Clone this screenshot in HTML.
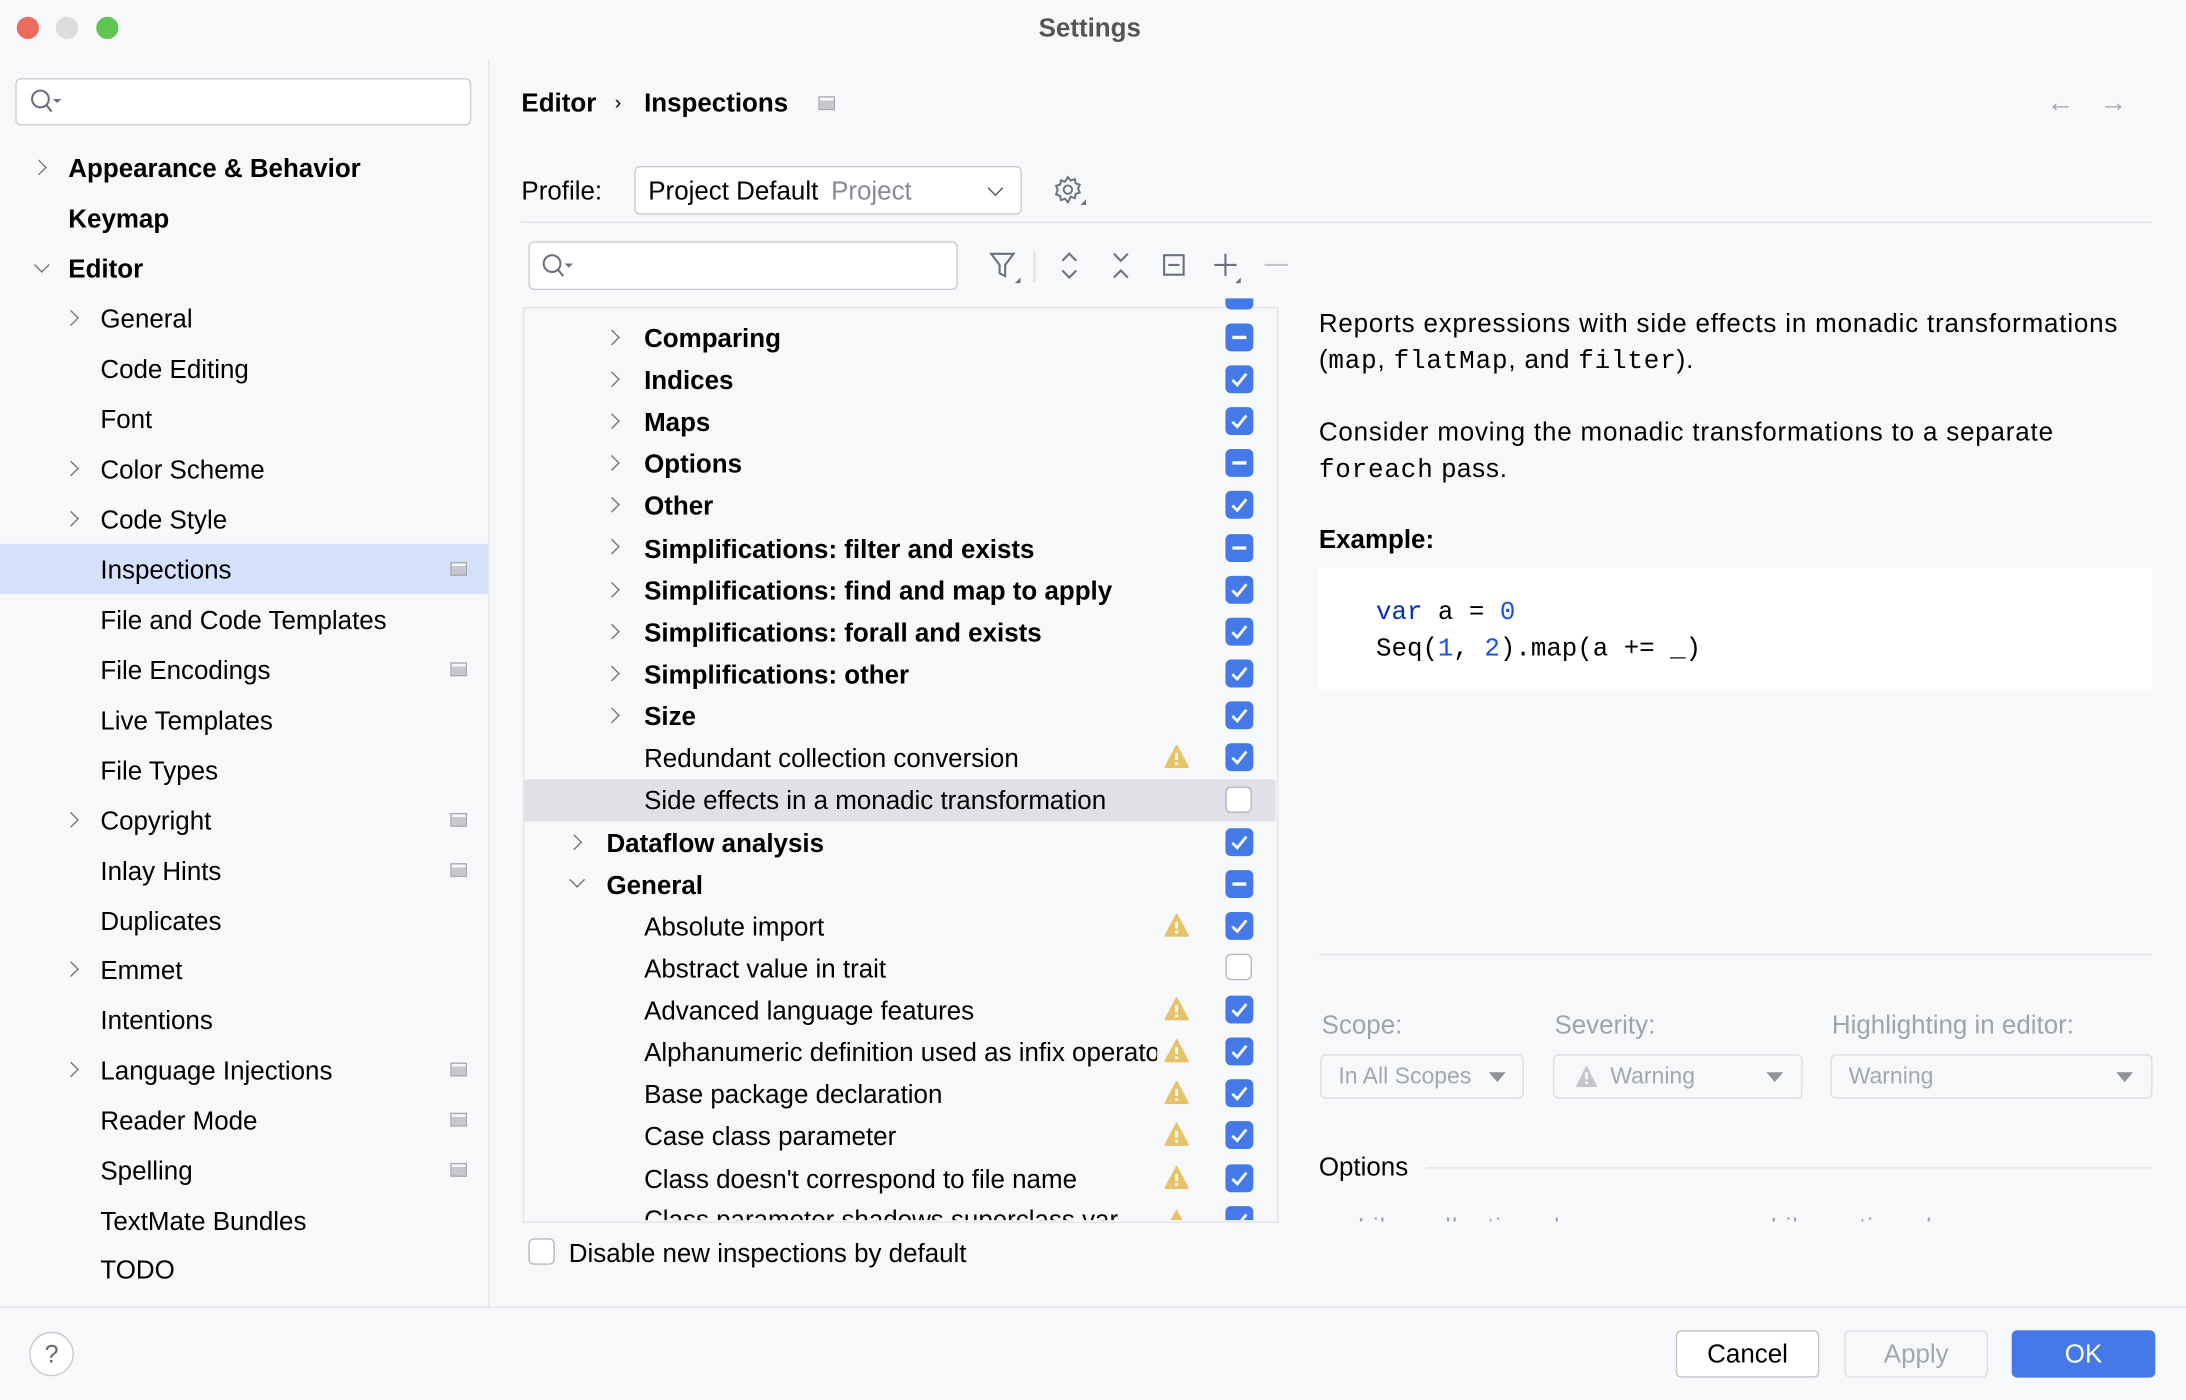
<!DOCTYPE html>
<html><head><meta charset="utf-8"><style>
html,body{margin:0;padding:0;width:2186px;height:1400px;overflow:hidden;background:#f7f8fa}
#w{position:absolute;left:0;top:0;width:1568px;height:1004px;transform:scale(1.39413,1.39442);transform-origin:0 0;font-family:"Liberation Sans",sans-serif;color:#000;font-size:18.6px}
.a{position:absolute;white-space:nowrap;line-height:24px;height:24px}
.b{font-weight:bold}
.chev{position:absolute;width:7px;height:7px;border-right:1.5px solid #777;border-bottom:1.5px solid #777}
.r{transform:rotate(-45deg)}.d{transform:rotate(45deg)}
.cb{position:absolute;left:879px;width:20px;height:20px;border-radius:4px;background:#4479e7}
.cb.e{background:#fff;border:1.5px solid #b5b8c0;width:17px;height:17px}
.cb svg{position:absolute;left:0;top:0}
.warn{position:absolute;left:835px}
.mono{font-family:"Liberation Mono",monospace}
.pin{position:absolute;left:323px;width:10px;height:8px;border:1px solid #a8abb3;background:linear-gradient(#f7f8fa 0 2px,#c6c8ce 2px)}
.gr{color:#9fa3ab}
.ds{letter-spacing:.6px}
.dd{position:absolute;top:756px;height:30px;border:1px solid #dcdee3;border-radius:4px;background:#f7f8fa;color:#a3a7ae;font-size:16.5px;line-height:30px}
.tri{position:absolute;top:12px;width:0;height:0;border-left:6px solid transparent;border-right:6px solid transparent;border-top:7px solid #8e9299}
</style></head><body><div id="w">
<div style="position:absolute;left:12px;top:12px;width:16px;height:16px;border-radius:50%;background:#ed6a5e"></div>
<div style="position:absolute;left:40px;top:12px;width:16px;height:16px;border-radius:50%;background:#dcdcdc"></div>
<div style="position:absolute;left:69px;top:12px;width:16px;height:16px;border-radius:50%;background:#61c554"></div>
<div class="a b" style="left:745px;top:8px;color:#555;font-size:18.6px">Settings</div>
<div style="position:absolute;left:350px;top:42px;width:1px;height:895px;background:#e6e7ea"></div>
<div style="position:absolute;left:11px;top:56px;width:325px;height:32px;border:1px solid #c9ccd2;border-radius:4px;background:#fff"></div>
<svg style="position:absolute;left:21px;top:63px" width="26" height="20"><circle cx="8" cy="8" r="6" fill="none" stroke="#6c707e" stroke-width="1.5"/><path d="M12 12l4 5" stroke="#6c707e" stroke-width="1.5"/><path d="M17 8h6l-3 3z" fill="#6c707e"/></svg>
<div class="chev r" style="left:24px;top:116px"></div>
<div class="a b" style="left:49px;top:109px">Appearance &amp; Behavior</div>
<div class="a b" style="left:49px;top:145px">Keymap</div>
<div class="chev d" style="left:26px;top:186px"></div>
<div class="a b" style="left:49px;top:181px">Editor</div>
<div class="chev r" style="left:47px;top:224px"></div>
<div class="a" style="left:72px;top:217px">General</div>
<div class="a" style="left:72px;top:253px">Code Editing</div>
<div class="a" style="left:72px;top:289px">Font</div>
<div class="chev r" style="left:47px;top:332px"></div>
<div class="a" style="left:72px;top:325px">Color Scheme</div>
<div class="chev r" style="left:47px;top:368px"></div>
<div class="a" style="left:72px;top:361px">Code Style</div>
<div style="position:absolute;left:0;top:390px;width:350px;height:36px;background:#d5e1fa"></div>
<div class="a" style="left:72px;top:397px">Inspections</div><div class="pin" style="top:403px"></div>
<div class="a" style="left:72px;top:433px">File and Code Templates</div>
<div class="a" style="left:72px;top:469px">File Encodings</div><div class="pin" style="top:475px"></div>
<div class="a" style="left:72px;top:505px">Live Templates</div>
<div class="a" style="left:72px;top:541px">File Types</div>
<div class="chev r" style="left:47px;top:584px"></div>
<div class="a" style="left:72px;top:577px">Copyright</div><div class="pin" style="top:583px"></div>
<div class="a" style="left:72px;top:613px">Inlay Hints</div><div class="pin" style="top:619px"></div>
<div class="a" style="left:72px;top:649px">Duplicates</div>
<div class="chev r" style="left:47px;top:691px"></div>
<div class="a" style="left:72px;top:684px">Emmet</div>
<div class="a" style="left:72px;top:720px">Intentions</div>
<div class="chev r" style="left:47px;top:763px"></div>
<div class="a" style="left:72px;top:756px">Language Injections</div><div class="pin" style="top:762px"></div>
<div class="a" style="left:72px;top:792px">Reader Mode</div><div class="pin" style="top:798px"></div>
<div class="a" style="left:72px;top:828px">Spelling</div><div class="pin" style="top:834px"></div>
<div class="a" style="left:72px;top:864px">TextMate Bundles</div>
<div class="a" style="left:72px;top:899px">TODO</div>
<div class="a b" style="left:374px;top:62px">Editor</div>
<div class="a" style="left:441px;top:61px;font-size:14px">›</div>
<div class="a b" style="left:462px;top:62px">Inspections</div>
<div class="pin" style="left:587px;top:69px"></div>
<div class="a" style="left:1468px;top:62px;color:#a0a4ab;font-size:20px">←</div>
<div class="a" style="left:1506px;top:62px;color:#a0a4ab;font-size:20px">→</div>
<div class="a" style="left:374px;top:125px">Profile:</div>
<div style="position:absolute;left:455px;top:119px;width:276px;height:33px;border:1px solid #c9ccd2;border-radius:4px;background:#fff"></div>
<div class="a" style="left:465px;top:125px">Project Default <span style="color:#888b93;margin-left:4px">Project</span></div>
<div class="chev d" style="left:710px;top:131px;border-color:#555"></div>
<svg style="position:absolute;left:755px;top:125px" width="26" height="24"><circle cx="11" cy="11" r="3" fill="none" stroke="#6c707e" stroke-width="1.4"/><path d="M11 2l2 2.5 3-1 .5 3 3 1-1.2 2.8 1.2 2.8-3 1-.5 3-3-1L11 20l-2-2.5-3 1-.5-3-3-1L3.7 11 2.5 8.3l3-1 .5-3 3 1z" fill="none" stroke="#6c707e" stroke-width="1.4"/><path d="M20 22h4v-4z" fill="#6c707e"/></svg>
<div style="position:absolute;left:374px;top:159px;width:1170px;height:1px;background:#e4e6ea"></div>
<div style="position:absolute;left:379px;top:173px;width:306px;height:33px;border:1px solid #c9ccd2;border-radius:4px;background:#fff"></div>
<svg style="position:absolute;left:388px;top:181px" width="26" height="20"><circle cx="8" cy="8" r="6" fill="none" stroke="#6c707e" stroke-width="1.5"/><path d="M12 12l4 5" stroke="#6c707e" stroke-width="1.5"/><path d="M17 8h6l-3 3z" fill="#6c707e"/></svg>
<svg style="position:absolute;left:708px;top:178px" width="230" height="26" fill="none" stroke="#6c707e" stroke-width="1.5"><path d="M3 4h16l-6 8v8l-4-2v-6z"/><path d="M20 25h4v-4z" fill="#6c707e" stroke="none"/><line x1="34" y1="2" x2="34" y2="24" stroke="#e0e1e5"/><path d="M54 9l5-5 5 5M54 16l5 5 5-5"/><path d="M91 4l5 5 5-5M91 21l5-5 5 5"/><rect x="127" y="5" width="14" height="14"/><path d="M130 12h8"/><path d="M171 4v16M163 12h16"/><path d="M178 25h4v-4z" fill="#6c707e" stroke="none"/><path d="M199 12h17" stroke="#c3c5ca"/></svg>
<div style="position:absolute;left:375px;top:220px;width:540px;height:656px;border:1px solid #e2e4e8;border-top:none;overflow:hidden">
<div style="position:absolute;left:0;top:0;width:540px;height:1px;background:#e2e4e8"></div>
</div>
<div class="cb" style="top:214px;height:8px;border-radius:0 0 4px 4px"></div>
<div style="position:absolute;left:376px;top:559px;width:539px;height:30px;background:#dfe1e5"></div>
<div class="chev r" style="left:435px;top:238px"></div><div class="a b" style="left:462px;top:231px">Comparing</div>
<div class="chev r" style="left:435px;top:268px"></div><div class="a b" style="left:462px;top:261px">Indices</div>
<div class="chev r" style="left:435px;top:298px"></div><div class="a b" style="left:462px;top:291px">Maps</div>
<div class="chev r" style="left:435px;top:328px"></div><div class="a b" style="left:462px;top:321px">Options</div>
<div class="chev r" style="left:435px;top:358px"></div><div class="a b" style="left:462px;top:351px">Other</div>
<div class="chev r" style="left:435px;top:388px"></div><div class="a b" style="left:462px;top:382px">Simplifications: filter and exists</div>
<div class="chev r" style="left:435px;top:419px"></div><div class="a b" style="left:462px;top:412px">Simplifications: find and map to apply</div>
<div class="chev r" style="left:435px;top:449px"></div><div class="a b" style="left:462px;top:442px">Simplifications: forall and exists</div>
<div class="chev r" style="left:435px;top:479px"></div><div class="a b" style="left:462px;top:472px">Simplifications: other</div>
<div class="chev r" style="left:435px;top:509px"></div><div class="a b" style="left:462px;top:502px">Size</div>
<div class="a" style="left:462px;top:532px">Redundant collection conversion</div>
<div class="a" style="left:462px;top:562px">Side effects in a monadic transformation</div>
<div class="chev r" style="left:408px;top:600px"></div><div class="a b" style="left:435px;top:593px">Dataflow analysis</div>
<div class="chev d" style="left:410px;top:627px"></div><div class="a b" style="left:435px;top:623px">General</div>
<div class="a" style="left:462px;top:653px">Absolute import</div>
<div class="a" style="left:462px;top:683px">Abstract value in trait</div>
<div class="a" style="left:462px;top:713px">Advanced language features</div>
<div class="a" style="left:462px;top:743px;width:368px;overflow:hidden">Alphanumeric definition used as infix operator</div>
<div class="a" style="left:462px;top:773px">Base package declaration</div>
<div class="a" style="left:462px;top:803px">Case class parameter</div>
<div class="a" style="left:462px;top:834px">Class doesn't correspond to file name</div>
<div style="position:absolute;left:376px;top:863px;width:539px;height:12px;overflow:hidden"><div class="a" style="left:86px;top:0">Class parameter shadows superclass var</div></div>
<div class="cb" style="top:232px"><svg width="20" height="20"><path d="M5 10h10" stroke="#fff" stroke-width="2.4"/></svg></div>
<div class="cb" style="top:262px"><svg width="20" height="20"><path d="M5 10.5l3.5 3.5 6.5-8" fill="none" stroke="#fff" stroke-width="2"/></svg></div>
<div class="cb" style="top:292px"><svg width="20" height="20"><path d="M5 10.5l3.5 3.5 6.5-8" fill="none" stroke="#fff" stroke-width="2"/></svg></div>
<div class="cb" style="top:322px"><svg width="20" height="20"><path d="M5 10h10" stroke="#fff" stroke-width="2.4"/></svg></div>
<div class="cb" style="top:352px"><svg width="20" height="20"><path d="M5 10.5l3.5 3.5 6.5-8" fill="none" stroke="#fff" stroke-width="2"/></svg></div>
<div class="cb" style="top:383px"><svg width="20" height="20"><path d="M5 10h10" stroke="#fff" stroke-width="2.4"/></svg></div>
<div class="cb" style="top:413px"><svg width="20" height="20"><path d="M5 10.5l3.5 3.5 6.5-8" fill="none" stroke="#fff" stroke-width="2"/></svg></div>
<div class="cb" style="top:443px"><svg width="20" height="20"><path d="M5 10.5l3.5 3.5 6.5-8" fill="none" stroke="#fff" stroke-width="2"/></svg></div>
<div class="cb" style="top:473px"><svg width="20" height="20"><path d="M5 10.5l3.5 3.5 6.5-8" fill="none" stroke="#fff" stroke-width="2"/></svg></div>
<div class="cb" style="top:503px"><svg width="20" height="20"><path d="M5 10.5l3.5 3.5 6.5-8" fill="none" stroke="#fff" stroke-width="2"/></svg></div>
<div class="cb" style="top:533px"><svg width="20" height="20"><path d="M5 10.5l3.5 3.5 6.5-8" fill="none" stroke="#fff" stroke-width="2"/></svg></div>
<div class="cb e" style="top:564px"></div>
<div class="cb" style="top:594px"><svg width="20" height="20"><path d="M5 10.5l3.5 3.5 6.5-8" fill="none" stroke="#fff" stroke-width="2"/></svg></div>
<div class="cb" style="top:624px"><svg width="20" height="20"><path d="M5 10h10" stroke="#fff" stroke-width="2.4"/></svg></div>
<div class="cb" style="top:654px"><svg width="20" height="20"><path d="M5 10.5l3.5 3.5 6.5-8" fill="none" stroke="#fff" stroke-width="2"/></svg></div>
<div class="cb e" style="top:684px"></div>
<div class="cb" style="top:714px"><svg width="20" height="20"><path d="M5 10.5l3.5 3.5 6.5-8" fill="none" stroke="#fff" stroke-width="2"/></svg></div>
<div class="cb" style="top:744px"><svg width="20" height="20"><path d="M5 10.5l3.5 3.5 6.5-8" fill="none" stroke="#fff" stroke-width="2"/></svg></div>
<div class="cb" style="top:774px"><svg width="20" height="20"><path d="M5 10.5l3.5 3.5 6.5-8" fill="none" stroke="#fff" stroke-width="2"/></svg></div>
<div class="cb" style="top:804px"><svg width="20" height="20"><path d="M5 10.5l3.5 3.5 6.5-8" fill="none" stroke="#fff" stroke-width="2"/></svg></div>
<div class="cb" style="top:835px"><svg width="20" height="20"><path d="M5 10.5l3.5 3.5 6.5-8" fill="none" stroke="#fff" stroke-width="2"/></svg></div>
<div class="cb" style="top:865px;height:10px;border-radius:4px 4px 0 0"><svg width="20" height="10"><path d="M5 10.5l3.5 3.5 6.5-8" fill="none" stroke="#fff" stroke-width="2"/></svg></div>
<svg class="warn" style="top:534px" width="18" height="17"><path d="M9 1l8 15H1z" fill="#e8c16b" stroke="#e8c16b" stroke-linejoin="round" stroke-width="1.5"/><path d="M9 6v5" stroke="#fff" stroke-width="2"/><circle cx="9" cy="13.5" r="1.1" fill="#fff"/></svg>
<svg class="warn" style="top:655px" width="18" height="17"><path d="M9 1l8 15H1z" fill="#e8c16b" stroke="#e8c16b" stroke-linejoin="round" stroke-width="1.5"/><path d="M9 6v5" stroke="#fff" stroke-width="2"/><circle cx="9" cy="13.5" r="1.1" fill="#fff"/></svg>
<svg class="warn" style="top:715px" width="18" height="17"><path d="M9 1l8 15H1z" fill="#e8c16b" stroke="#e8c16b" stroke-linejoin="round" stroke-width="1.5"/><path d="M9 6v5" stroke="#fff" stroke-width="2"/><circle cx="9" cy="13.5" r="1.1" fill="#fff"/></svg>
<svg class="warn" style="top:745px" width="18" height="17"><path d="M9 1l8 15H1z" fill="#e8c16b" stroke="#e8c16b" stroke-linejoin="round" stroke-width="1.5"/><path d="M9 6v5" stroke="#fff" stroke-width="2"/><circle cx="9" cy="13.5" r="1.1" fill="#fff"/></svg>
<svg class="warn" style="top:775px" width="18" height="17"><path d="M9 1l8 15H1z" fill="#e8c16b" stroke="#e8c16b" stroke-linejoin="round" stroke-width="1.5"/><path d="M9 6v5" stroke="#fff" stroke-width="2"/><circle cx="9" cy="13.5" r="1.1" fill="#fff"/></svg>
<svg class="warn" style="top:805px" width="18" height="17"><path d="M9 1l8 15H1z" fill="#e8c16b" stroke="#e8c16b" stroke-linejoin="round" stroke-width="1.5"/><path d="M9 6v5" stroke="#fff" stroke-width="2"/><circle cx="9" cy="13.5" r="1.1" fill="#fff"/></svg>
<svg class="warn" style="top:836px" width="18" height="17"><path d="M9 1l8 15H1z" fill="#e8c16b" stroke="#e8c16b" stroke-linejoin="round" stroke-width="1.5"/><path d="M9 6v5" stroke="#fff" stroke-width="2"/><circle cx="9" cy="13.5" r="1.1" fill="#fff"/></svg>
<svg class="warn" style="top:866px" width="18" height="9"><path d="M9 1l8 15H1z" fill="#e8c16b"/></svg>
<div style="position:absolute;left:379px;top:888px;width:17px;height:17px;border:1.5px solid #b5b8c0;border-radius:4px;background:#fff"></div>
<div class="a" style="left:408px;top:887px">Disable new inspections by default</div>
<div class="a ds" style="left:946px;top:220px">Reports expressions with side effects in monadic transformations</div>
<div class="a ds" style="left:946px;top:246px">(<span class="mono">map</span>, <span class="mono">flatMap</span>, and <span class="mono">filter</span>).</div>
<div class="a ds" style="left:946px;top:298px">Consider moving the monadic transformations to a separate</div>
<div class="a ds" style="left:946px;top:324px"><span class="mono">foreach</span> pass.</div>
<div class="a b" style="left:946px;top:375px">Example:</div>
<div style="position:absolute;left:946px;top:407px;width:598px;height:87px;background:#fff"></div>
<div class="a mono" style="left:987px;top:428px;font-size:18.5px"><span style="color:#0033b3">var</span> a = <span style="color:#1750eb">0</span></div>
<div class="a mono" style="left:987px;top:454px;font-size:18.5px">Seq(<span style="color:#1750eb">1</span>, <span style="color:#1750eb">2</span>).map(a += _)</div>
<div style="position:absolute;left:946px;top:684px;width:598px;height:1px;background:#e4e6ea"></div>
<div class="a gr" style="left:948px;top:723px">Scope:</div>
<div class="a gr" style="left:1115px;top:723px">Severity:</div>
<div class="a gr" style="left:1314px;top:723px">Highlighting in editor:</div>
<div class="dd" style="left:947px;width:144px"><span style="margin-left:12px">In All Scopes</span><div class="tri" style="left:120px"></div></div>
<div class="dd" style="left:1114px;width:177px"><svg style="position:absolute;left:15px;top:7px" width="16" height="16"><path d="M8 1l7 14H1z" fill="#c4c6cb" stroke="#c4c6cb" stroke-linejoin="round"/><path d="M8 5v5" stroke="#fff" stroke-width="1.8"/><circle cx="8" cy="12.5" r="1" fill="#fff"/></svg><span style="margin-left:40px">Warning</span><div class="tri" style="left:152px"></div></div>
<div class="dd" style="left:1313px;width:229px"><span style="margin-left:12px">Warning</span><div class="tri" style="left:204px"></div></div>
<div class="a" style="left:946px;top:825px">Options</div>
<div style="position:absolute;left:1023px;top:837px;width:521px;height:1px;background:#e4e6ea"></div>
<div style="position:absolute;left:970px;top:868px;width:500px;height:8px;overflow:hidden"><div class="a gr" style="left:4px;top:0;font-size:18px;letter-spacing:.8px">Like collection classes</div><div class="a gr" style="left:300px;top:0;font-size:18px;letter-spacing:.8px">Like option classes</div></div>
<div style="position:absolute;left:0;top:937px;width:1568px;height:1px;background:#e4e6ea"></div>
<div style="position:absolute;left:21px;top:955px;width:30px;height:30px;border:1px solid #c9ccd2;border-radius:50%;background:#fff;text-align:center;line-height:30px;color:#666;font-size:18px">?</div>
<div style="position:absolute;left:1202px;top:954px;width:101px;height:32px;border:1px solid #c1c4cb;border-radius:4px;background:#fff;text-align:center;line-height:32px">Cancel</div>
<div style="position:absolute;left:1323px;top:954px;width:101px;height:32px;border:1px solid #dcdee3;border-radius:4px;background:#f7f8fa;text-align:center;line-height:32px;color:#a3a7ae">Apply</div>
<div style="position:absolute;left:1443px;top:954px;width:103px;height:34px;border-radius:4px;background:#4479e7;text-align:center;line-height:34px;color:#fff">OK</div>
</div></body></html>
